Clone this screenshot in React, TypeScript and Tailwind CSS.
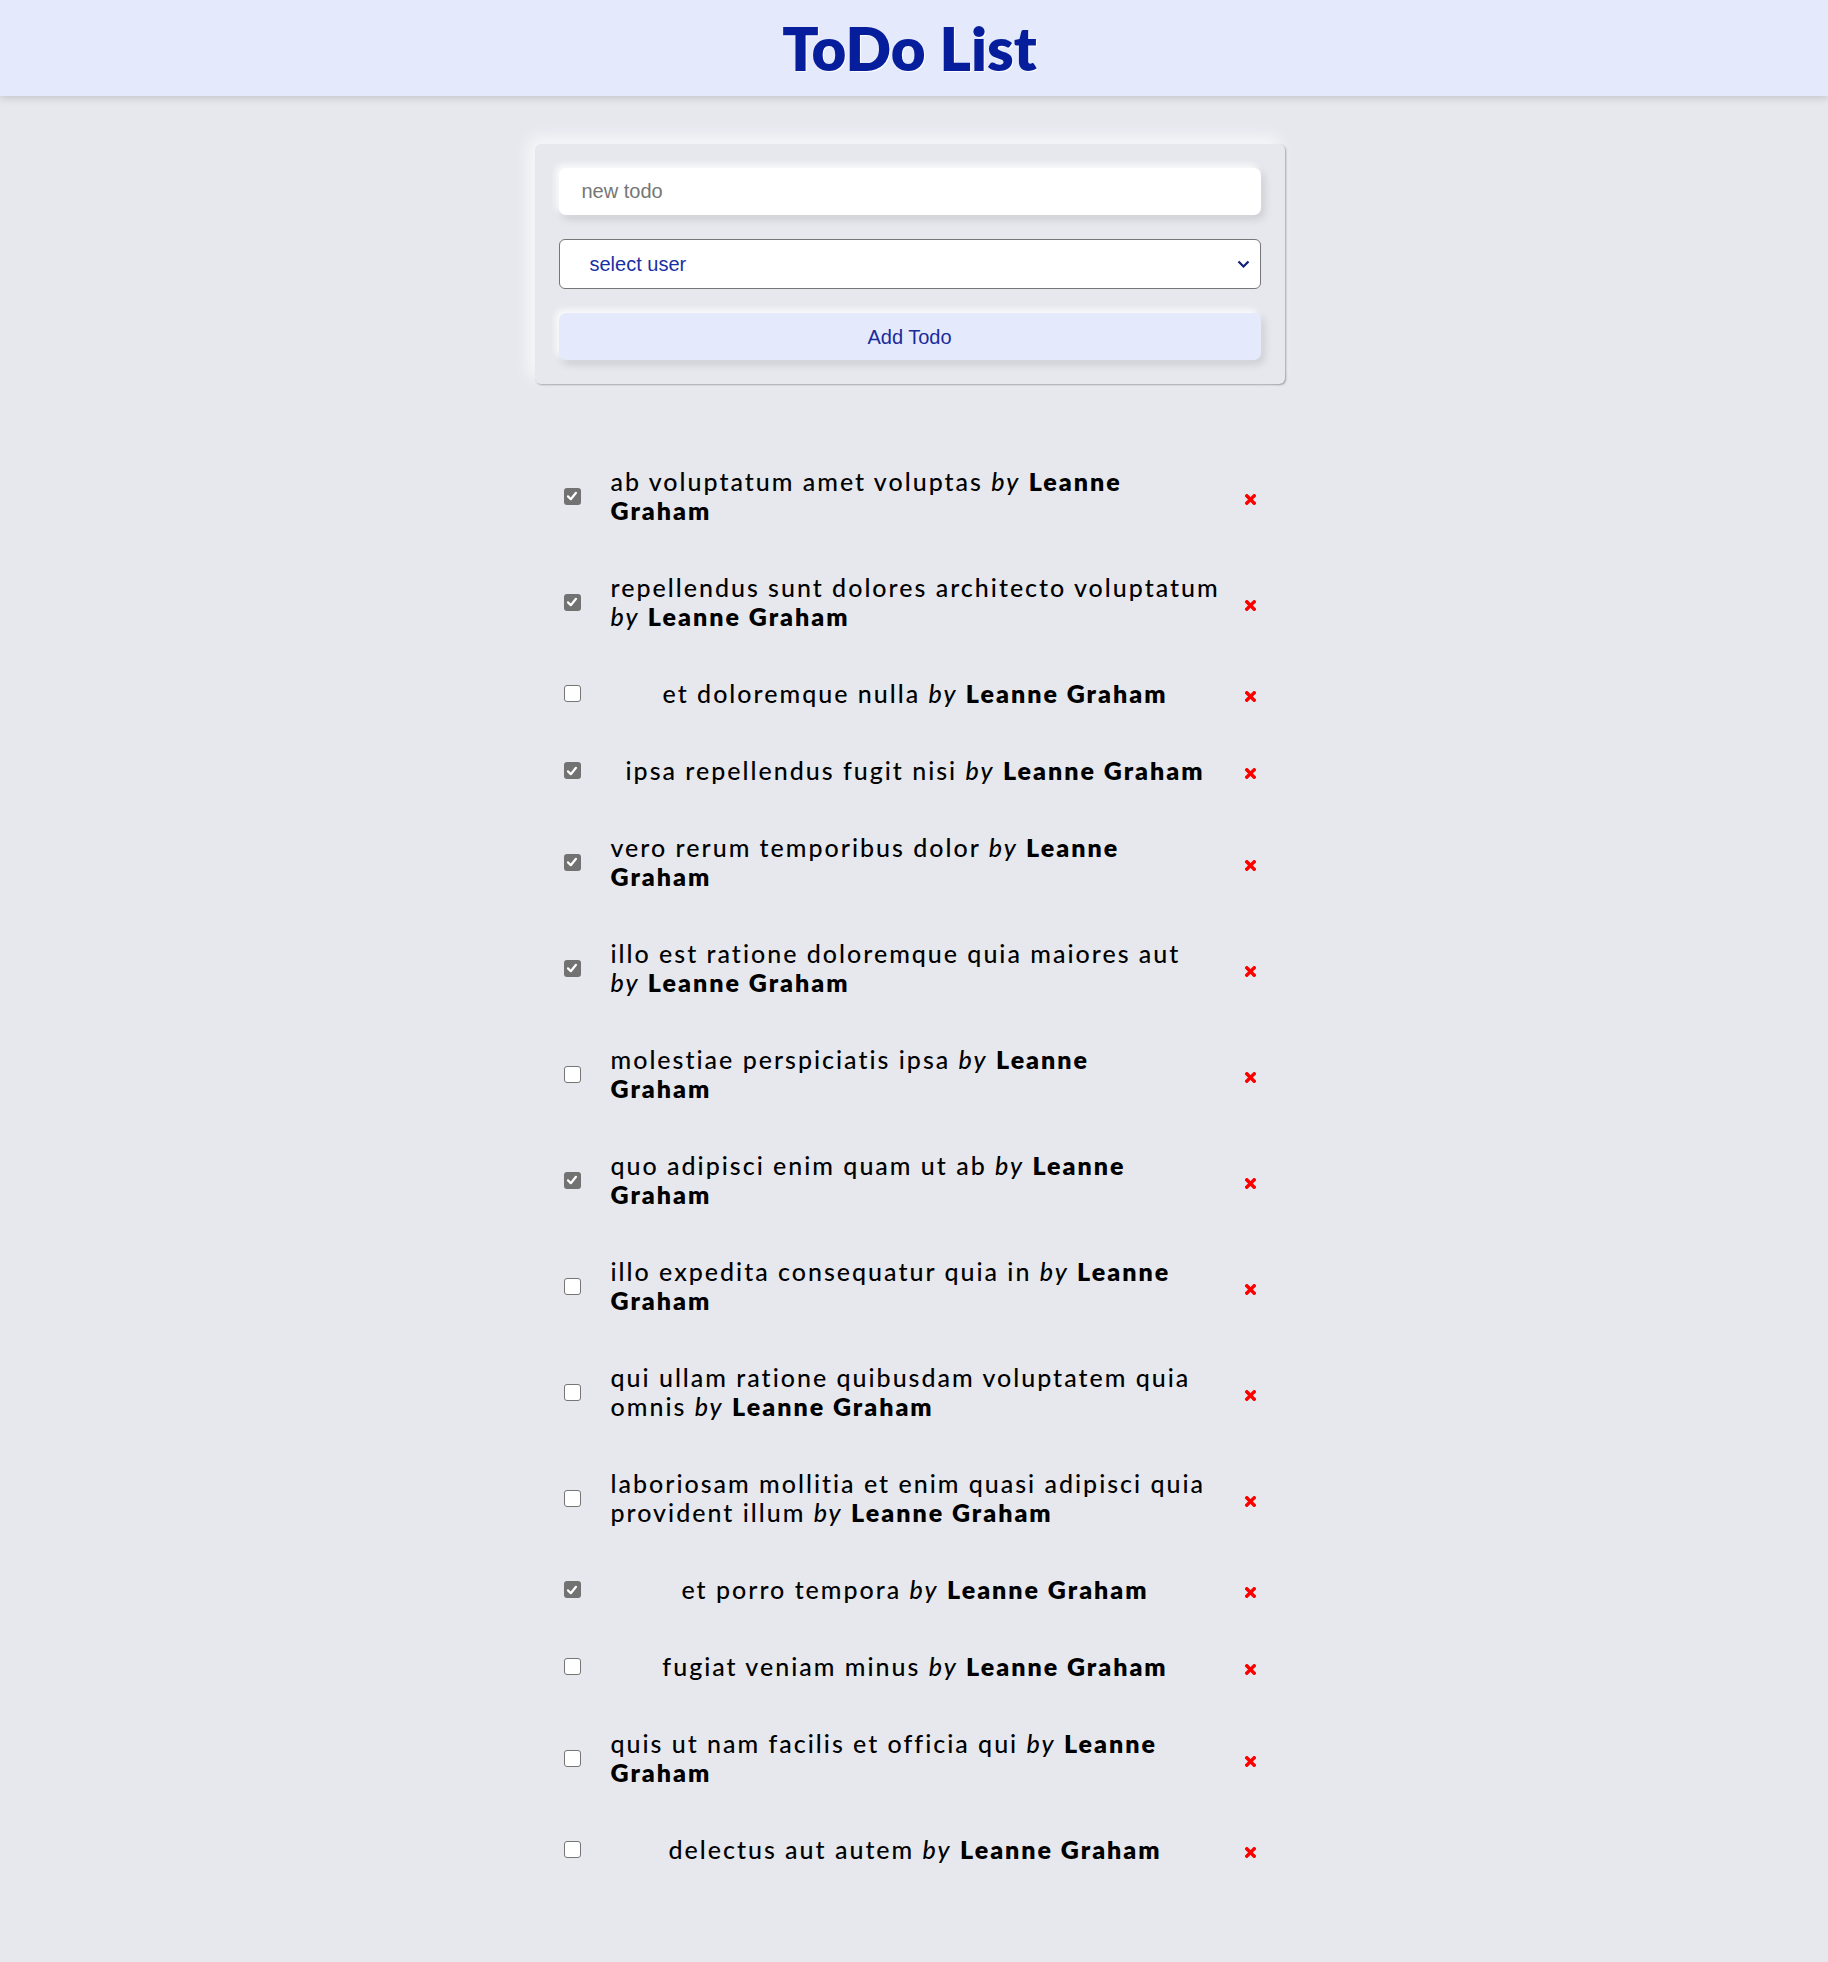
import React from "react";

type Brk = "none" | "name" | "by" | number;
type Todo = { title: string; done: boolean; brk: Brk };

const todos: Todo[] = [
  { title: "ab voluptatum amet voluptas", done: true, brk: "name" },
  { title: "repellendus sunt dolores architecto voluptatum", done: true, brk: "by" },
  { title: "et doloremque nulla", done: false, brk: "none" },
  { title: "ipsa repellendus fugit nisi", done: true, brk: "none" },
  { title: "vero rerum temporibus dolor", done: true, brk: "name" },
  { title: "illo est ratione doloremque quia maiores aut", done: true, brk: "by" },
  { title: "molestiae perspiciatis ipsa", done: false, brk: "name" },
  { title: "quo adipisci enim quam ut ab", done: true, brk: "name" },
  { title: "illo expedita consequatur quia in", done: false, brk: "name" },
  { title: "qui ullam ratione quibusdam voluptatem quia omnis", done: false, brk: 6 },
  { title: "laboriosam mollitia et enim quasi adipisci quia provident illum", done: false, brk: 7 },
  { title: "et porro tempora", done: true, brk: "none" },
  { title: "fugiat veniam minus", done: false, brk: "none" },
  { title: "quis ut nam facilis et officia qui", done: false, brk: "name" },
  { title: "delectus aut autem", done: false, brk: "none" },
];

const By = () => <em className="italic">by</em>;
const B = ({ children }: { children: React.ReactNode }) => <strong className="font-extrabold">{children}</strong>;

function TodoText({ title, brk }: { title: string; brk: Brk }) {
  if (brk === "none") {
    return (
      <span className="block whitespace-nowrap">
        {title} <By /> <B>Leanne Graham</B>
      </span>
    );
  }
  let l1: React.ReactNode;
  let l2: React.ReactNode;
  if (brk === "name") {
    l1 = (
      <>
        {title} <By /> <B>Leanne</B>
      </>
    );
    l2 = <B>Graham</B>;
  } else if (brk === "by") {
    l1 = <>{title}</>;
    l2 = (
      <>
        <By /> <B>Leanne Graham</B>
      </>
    );
  } else {
    const w = title.split(" ");
    l1 = <>{w.slice(0, brk).join(" ")}</>;
    l2 = (
      <>
        {w.slice(brk).join(" ")} <By /> <B>Leanne Graham</B>
      </>
    );
  }
  return (
    <span className="block w-full">
      <span className="block whitespace-nowrap">{l1}</span>
      <span className="block whitespace-nowrap">{l2}</span>
    </span>
  );
}

function Check({ checked }: { checked: boolean }) {
  return checked ? (
    <span className="flex h-[17px] w-[17px] shrink-0 items-center justify-center rounded-[3px] bg-[#727272]">
      <svg width="12" height="12" viewBox="0 0 12 12">
        <path d="M2 6.4 L4.8 9.2 L10 2.8" fill="none" stroke="#fff" strokeWidth="2.2" strokeLinecap="round" strokeLinejoin="round" />
      </svg>
    </span>
  ) : (
    <span className="block h-[17px] w-[17px] shrink-0 rounded-[3px] border border-[#767676] bg-white" />
  );
}

function Cross() {
  return (
    <svg width="11" height="11" viewBox="0 0 11 11" className="shrink-0 translate-y-[3px]">
      <path d="M1.8 1.8 L9.2 9.2 M9.2 1.8 L1.8 9.2" stroke="#ff0000" strokeWidth="3.4" strokeLinecap="square" />
    </svg>
  );
}

export default function App() {
  return (
    <div className="min-h-screen bg-[#e7e8ee] pb-[75px] font-['Lato',sans-serif] text-black">
      <header className="flex h-[96px] items-center justify-center bg-[#e4e9fc] pr-[9px] shadow-[0_2px_8px_rgba(0,0,0,0.16)]">
        <h1 className="text-[60px] font-extrabold leading-none text-[#061e9c] [text-shadow:1px_1px_1px_#ffffff]">
          ToDo List
        </h1>
      </header>

      <main className="pr-[9px]">
        <div className="mx-auto mt-[48px] flex w-[750px] flex-col gap-[24px] rounded-[6px] bg-[#e7e8ee] p-[24px] shadow-[-6px_-6px_16px_rgba(255,255,255,0.75),1px_1px_2px_rgba(0,0,0,0.35)]">
          <input
            type="text"
            placeholder="new todo"
            className="h-[47px] w-full rounded-[7px] bg-white pl-[23px] font-['Liberation_Sans',Arial,sans-serif] text-[20px] text-black outline-none shadow-[-3px_-3px_6px_rgba(255,255,255,0.9),3px_4px_8px_rgba(0,0,0,0.13)] placeholder:text-[#767676]"
          />
          <div className="relative">
            <select className="h-[50px] w-full appearance-none rounded-[6px] border border-[#767676] bg-white pl-[30px] font-['Liberation_Sans',Arial,sans-serif] text-[20px] text-[#1a2fa4] outline-none">
              <option>select user</option>
            </select>
            <svg
              width="13"
              height="9"
              viewBox="0 0 13 9"
              className="pointer-events-none absolute right-[11px] top-[21px]"
            >
              <path d="M1.5 1.5 L6.5 6.5 L11.5 1.5" fill="none" stroke="#0f1f7a" strokeWidth="2.2" />
            </svg>
          </div>
          <button className="h-[47px] w-full rounded-[7px] bg-[#e4e9fc] font-['Liberation_Sans',Arial,sans-serif] text-[20px] text-[#1b2b9a] shadow-[-3px_-3px_6px_rgba(255,255,255,0.9),3px_4px_8px_rgba(0,0,0,0.13)]">
            Add Todo
          </button>
        </div>

        <ul className="mx-auto mt-[59px] w-[750px]">
          {todos.map((t, i) => (
            <li key={i} className="flex items-center px-[29px] py-[24px]">
              <Check checked={t.done} />
              <div className="ml-[30px] mr-[25px] flex min-w-0 flex-1 justify-center text-[25px] font-medium leading-[29px] tracking-[2px]">
                <TodoText title={t.title} brk={t.brk} />
              </div>
              <Cross />
            </li>
          ))}
        </ul>
      </main>
    </div>
  );
}
